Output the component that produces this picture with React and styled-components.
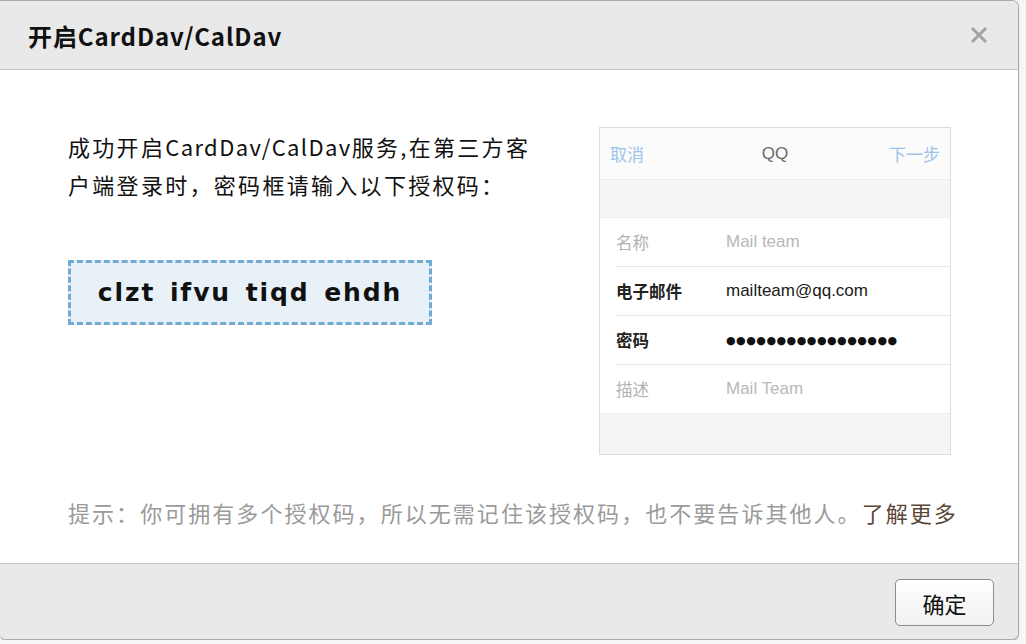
import React from 'react';
import styled, { createGlobalStyle } from 'styled-components';

const GlobalStyle = createGlobalStyle`
  html, body {
    margin: 0;
    padding: 0;
    background: #f6f6f6;
  }
  body {
    font-family: "Noto Sans CJK SC", "Noto Sans", sans-serif;
    overflow: hidden;
  }
`;

const Dialog = styled.div`
  width: 1018px;
  height: 638px;
  display: flex;
  flex-direction: column;
  background: #fff;
  border: 1px solid #a9a9a9;
  border-left: none;
  border-radius: 0 7px 7px 6px;
  box-shadow: 0 1px 1px rgba(0, 0, 0, 0.25);
  overflow: hidden;
`;

const Header = styled.div`
  height: 68px;
  flex-shrink: 0;
  display: flex;
  align-items: center;
  justify-content: space-between;
  padding: 0 28px 0 28px;
  background: #e9e9e9;
  border-bottom: 1px solid #c4c4c4;
`;

const Title = styled.h1`
  margin: 0;
  font-size: 24px;
  font-weight: 700;
  color: #111;
  letter-spacing: 0.9px;
`;

const Close = styled.button`
  border: none;
  background: none;
  padding: 0;
  width: 22px;
  height: 22px;
  display: flex;
  align-items: center;
  justify-content: center;
  cursor: pointer;
`;

const Body = styled.div`
  flex: 1;
  display: flex;
  flex-direction: column;
  padding: 57px 0 0 68px;
`;

const Top = styled.div`
  display: flex;
  justify-content: space-between;
  padding-right: 67px;
`;

const Left = styled.div`
  display: flex;
  flex-direction: column;
`;

const Intro = styled.p`
  margin: 0;
  font-size: 22px;
  line-height: 38px;
  letter-spacing: 2.3px;
  color: #111;
`;

const Latin = styled.span`
  letter-spacing: 1.4px;
`;

const CodeBox = styled.div`
  margin-top: 57px;
  width: 358px;
  height: 59px;
  display: flex;
  align-items: center;
  justify-content: center;
  background: #e8f1f8;
  border: 3px dashed #72abd2;
  font-family: "DejaVu Sans", "Noto Sans", sans-serif;
  font-size: 25px;
  font-weight: 700;
  letter-spacing: 1.9px;
  word-spacing: 4px;
  color: #111;
`;

const Phone = styled.div`
  width: 350px;
  height: 326px;
  display: flex;
  flex-direction: column;
  border: 1px solid #dcdcdc;
  background: #f5f5f7;
  font-family: "Noto Sans CJK SC", "Noto Sans", sans-serif;
`;

const NavBar = styled.div`
  height: 51px;
  display: flex;
  align-items: center;
  justify-content: space-between;
  padding: 0 10px 0 10px;
  background: #fbfbfb;
  border-bottom: 1px solid #ececec;
  font-size: 17px;
`;

const NavLink = styled.span`
  color: #9cc3ea;
  width: 60px;
  text-align: ${(p) => (p.$right ? 'right' : 'left')};
`;

const NavTitle = styled.span`
  color: #6a6a6a;
  font-family: "Liberation Sans", sans-serif;
  font-size: 17px;
`;

const Gap = styled.div`
  height: ${(p) => p.$h}px;
  background: #f5f5f7;
`;

const Rows = styled.div`
  background: #fff;
  padding-left: 16px;
  border-top: 1px solid #efefef;
  border-bottom: 1px solid #efefef;
`;

const Row = styled.div`
  height: 48px;
  display: flex;
  align-items: center;
  border-bottom: ${(p) => (p.$last ? 'none' : '1px solid #e6e6e6')};
  font-size: 16.5px;
  color: ${(p) => (p.$strong ? '#222' : '#b2b2b2')};
`;

const Label = styled.span`
  width: 110px;
  font-weight: ${(p) => (p.$strong ? 600 : 400)};
`;

const Value = styled.span`
  font-family: "Liberation Sans", sans-serif;
  font-size: 17px;
  color: ${(p) => (p.$strong ? '#1a1a1a' : '#b8b8b8')};
`;

const Dots = styled.span`
  font-family: "DejaVu Sans", sans-serif;
  font-size: 11px;
  letter-spacing: 0.5px;
  color: #111;
`;

const Tip = styled.p`
  margin: 41px 0 0 0;
  font-size: 22px;
  letter-spacing: 2.05px;
  color: #9a9a9a;
`;

const More = styled.a`
  color: #5a4637;
  text-decoration: none;
`;

const Footer = styled.div`
  height: 75px;
  flex-shrink: 0;
  display: flex;
  align-items: center;
  justify-content: flex-end;
  padding-right: 24px;
  background: #e9e9e9;
  border-top: 1px solid #c4c4c4;
`;

const OkButton = styled.button`
  width: 99px;
  height: 47px;
  margin-top: 2px;
  border: 1px solid #8c8c8c;
  border-radius: 5px;
  background: linear-gradient(#ffffff, #f1f1f1);
  font-family: "Noto Sans CJK SC", sans-serif;
  font-size: 22px;
  color: #111;
  cursor: pointer;
`;

const rows = [
  { label: '名称', value: 'Mail team' },
  { label: '电子邮件', value: 'mailteam@qq.com', strong: true },
  { label: '密码', dots: true, strong: true },
  { label: '描述', value: 'Mail Team', last: true },
];

export default function App() {
  return (
    <>
      <GlobalStyle />
      <Dialog>
        <Header>
          <Title>开启CardDav/CalDav</Title>
          <Close aria-label="关闭">
            <svg width="20" height="20" viewBox="0 0 20 20">
              <path d="M3 3 L17 17 M17 3 L3 17" stroke="#a3a3a3" strokeWidth="3" strokeLinecap="butt" />
            </svg>
          </Close>
        </Header>
        <Body>
          <Top>
            <Left>
              <Intro>
                成功开启<Latin>CardDav/CalDav</Latin>服务,在第三方客
                <br />
                户端登录时，密码框请输入以下授权码：
              </Intro>
              <CodeBox>clzt ifvu tiqd ehdh</CodeBox>
            </Left>
            <Phone>
              <NavBar>
                <NavLink>取消</NavLink>
                <NavTitle>QQ</NavTitle>
                <NavLink $right>下一步</NavLink>
              </NavBar>
              <Gap $h={37} />
              <Rows>
                {rows.map((r) => (
                  <Row key={r.label} $strong={r.strong} $last={r.last}>
                    <Label $strong={r.strong}>{r.label}</Label>
                    {r.dots ? (
                      <Dots>●●●●●●●●●●●●●●●●●</Dots>
                    ) : (
                      <Value $strong={r.strong}>{r.value}</Value>
                    )}
                  </Row>
                ))}
              </Rows>
            </Phone>
          </Top>
          <Tip>
            提示：你可拥有多个授权码，所以无需记住该授权码，也不要告诉其他人。<More href="#">了解更多</More>
          </Tip>
        </Body>
        <Footer>
          <OkButton>确定</OkButton>
        </Footer>
      </Dialog>
    </>
  );
}
